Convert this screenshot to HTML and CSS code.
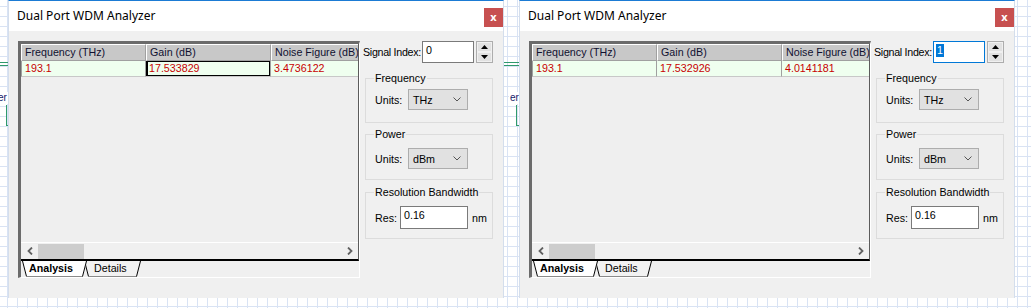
FILE: index.html
```html
<!DOCTYPE html>
<html lang="en">
<head>
  <meta charset="UTF-8">
  <title>Dual Port WDM Analyzer</title>
  <link rel="stylesheet" href="styles.css">
</head>
<body>

  <!-- layout canvas behind the dialogs -->
  <div class="backdrop">
    <div class="wire wire-top"></div>
    <div class="wire wire-bottom"></div>
    <span class="tag tag-1">er</span>
    <span class="tag tag-2">er</span>
    <div class="port port-1"></div>
    <div class="port port-2"></div>
  </div>

  <div class="desk">

    <!-- Analyzer 1 -->
    <div class="window">
      <div class="titlebar">
        <span class="title">Dual Port WDM Analyzer</span>
        <div class="close">x</div>
      </div>
      <div class="client">
        <div class="panel">
          <div class="grid">
            <div class="grid-head">
              <div class="cell c1">Frequency (THz)</div>
              <div class="cell c2">Gain (dB)</div>
              <div class="cell c3">Noise Figure (dB)</div>
            </div>
            <div class="grid-row">
              <div class="cell c1">193.1</div>
              <div class="cell c2 focus">17.533829</div>
              <div class="cell c3">3.4736122</div>
            </div>
            <div class="grid-body"></div>
            <div class="hscroll">
              <div class="arrow"><svg width="6" height="8" viewBox="0 0 6 8"><polyline points="5,0.5 1.5,4 5,7.5" /></svg></div>
              <div class="thumb"></div>
              <div class="track"></div>
              <div class="arrow"><svg width="6" height="8" viewBox="0 0 6 8"><polyline points="1,0.5 4.5,4 1,7.5" /></svg></div>
            </div>
          </div>
          <div class="tabs">
            <div class="tab tab-active">
              <svg class="tab-shape" width="65" height="16" viewBox="0 0 65 16"><polygon points="0,0 4,15.5 61,15.5 65,0" fill="#fff" /><path d="M0.5 0 L4.5 15.5" stroke="#000" /><path d="M4.5 15.5 H60.5" stroke="#8a8a8a" /><path d="M60.5 15.5 L64.5 0" stroke="#000" /></svg>
              <span>Analysis</span>
            </div>
            <div class="tab tab-details">
              <svg class="tab-shape" width="57" height="16" viewBox="0 0 57 16"><polygon points="0,0 4,15.5 53,15.5 57,0" fill="#f2f2f2" /><path d="M0.5 0 L4.5 15.5" stroke="#000" /><path d="M4.5 15.5 H52.5" stroke="#8a8a8a" /><path d="M52.5 15.5 L56.5 0" stroke="#000" /></svg>
              <span>Details</span>
            </div>
          </div>
        </div>

        <div class="side">
          <div class="index-row">
            <span class="index-label">Signal Index:</span>
            <div class="textbox index-box">0</div>
            <div class="spinner">
              <div class="spin"><svg width="7" height="4" viewBox="0 0 7 4"><polygon points="0,4 3.5,0 7,4" /></svg></div>
              <div class="spin"><svg width="7" height="4" viewBox="0 0 7 4"><polygon points="0,0 3.5,4 7,0" /></svg></div>
            </div>
          </div>
          <fieldset class="group group-freq">
            <legend>Frequency</legend>
            <div class="field">
              <span class="field-label">Units:</span>
              <div class="combo">THz<svg width="8" height="5" viewBox="0 0 8 5"><polyline points="0.5,0.5 4,4 7.5,0.5" /></svg></div>
            </div>
          </fieldset>
          <fieldset class="group group-power">
            <legend>Power</legend>
            <div class="field">
              <span class="field-label">Units:</span>
              <div class="combo">dBm<svg width="8" height="5" viewBox="0 0 8 5"><polyline points="0.5,0.5 4,4 7.5,0.5" /></svg></div>
            </div>
          </fieldset>
          <fieldset class="group group-res">
            <legend>Resolution Bandwidth</legend>
            <div class="field">
              <span class="field-label res-label">Res:</span>
              <div class="textbox res-box">0.16</div>
              <span class="unit">nm</span>
            </div>
          </fieldset>
        </div>
      </div>
    </div>

    <!-- Analyzer 2 -->
    <div class="window">
      <div class="titlebar">
        <span class="title">Dual Port WDM Analyzer</span>
        <div class="close">x</div>
      </div>
      <div class="client">
        <div class="panel">
          <div class="grid">
            <div class="grid-head">
              <div class="cell c1">Frequency (THz)</div>
              <div class="cell c2">Gain (dB)</div>
              <div class="cell c3">Noise Figure (dB)</div>
            </div>
            <div class="grid-row">
              <div class="cell c1">193.1</div>
              <div class="cell c2">17.532926</div>
              <div class="cell c3">4.0141181</div>
            </div>
            <div class="grid-body"></div>
            <div class="hscroll">
              <div class="arrow"><svg width="6" height="8" viewBox="0 0 6 8"><polyline points="5,0.5 1.5,4 5,7.5" /></svg></div>
              <div class="thumb"></div>
              <div class="track"></div>
              <div class="arrow"><svg width="6" height="8" viewBox="0 0 6 8"><polyline points="1,0.5 4.5,4 1,7.5" /></svg></div>
            </div>
          </div>
          <div class="tabs">
            <div class="tab tab-active">
              <svg class="tab-shape" width="65" height="16" viewBox="0 0 65 16"><polygon points="0,0 4,15.5 61,15.5 65,0" fill="#fff" /><path d="M0.5 0 L4.5 15.5" stroke="#000" /><path d="M4.5 15.5 H60.5" stroke="#8a8a8a" /><path d="M60.5 15.5 L64.5 0" stroke="#000" /></svg>
              <span>Analysis</span>
            </div>
            <div class="tab tab-details">
              <svg class="tab-shape" width="57" height="16" viewBox="0 0 57 16"><polygon points="0,0 4,15.5 53,15.5 57,0" fill="#f2f2f2" /><path d="M0.5 0 L4.5 15.5" stroke="#000" /><path d="M4.5 15.5 H52.5" stroke="#8a8a8a" /><path d="M52.5 15.5 L56.5 0" stroke="#000" /></svg>
              <span>Details</span>
            </div>
          </div>
        </div>

        <div class="side">
          <div class="index-row">
            <span class="index-label">Signal Index:</span>
            <div class="textbox index-box index-focus"><span class="selected">1</span></div>
            <div class="spinner">
              <div class="spin"><svg width="7" height="4" viewBox="0 0 7 4"><polygon points="0,4 3.5,0 7,4" /></svg></div>
              <div class="spin"><svg width="7" height="4" viewBox="0 0 7 4"><polygon points="0,0 3.5,4 7,0" /></svg></div>
            </div>
          </div>
          <fieldset class="group group-freq">
            <legend>Frequency</legend>
            <div class="field">
              <span class="field-label">Units:</span>
              <div class="combo">THz<svg width="8" height="5" viewBox="0 0 8 5"><polyline points="0.5,0.5 4,4 7.5,0.5" /></svg></div>
            </div>
          </fieldset>
          <fieldset class="group group-power">
            <legend>Power</legend>
            <div class="field">
              <span class="field-label">Units:</span>
              <div class="combo">dBm<svg width="8" height="5" viewBox="0 0 8 5"><polyline points="0.5,0.5 4,4 7.5,0.5" /></svg></div>
            </div>
          </fieldset>
          <fieldset class="group group-res">
            <legend>Resolution Bandwidth</legend>
            <div class="field">
              <span class="field-label res-label">Res:</span>
              <div class="textbox res-box">0.16</div>
              <span class="unit">nm</span>
            </div>
          </fieldset>
        </div>
      </div>
    </div>

  </div>

</body>
</html>
```

FILE: styles.css
```css
* {
  box-sizing: border-box;
}

body {
  margin: 0;
  height: 308px;
  overflow: hidden;
  position: relative;
  font-family: "Liberation Sans", Arial, sans-serif;
  font-size: 11px;
  color: #000;
  background-color: #fff;
  background-image:
    linear-gradient(to right, #d9e3f4 1px, transparent 1px),
    linear-gradient(to bottom, #d9e3f4 1px, transparent 1px);
  background-size: 10px 10px;
  background-position: 7px 6px;
}

/* canvas behind the dialogs */
.backdrop {
  position: absolute;
  inset: 0;
}

.wire {
  position: absolute;
  left: 0;
  width: 1000px;
  height: 1px;
  background: #2f9a6c;
}

.wire-top { top: 62px; }
.wire-bottom { top: 65px; }

.tag {
  position: absolute;
  top: 92px;
  height: 12px;
  padding: 0 1px;
  line-height: 12px;
  font-size: 10px;
  color: #14206a;
  background: #fff;
}

.tag-1 { left: -3px; }
.tag-2 { left: 509px; }

.port {
  position: absolute;
  top: 105px;
  width: 20px;
  height: 21px;
  border-left: 1px solid #2f9a6c;
  border-bottom: 1px solid #2f9a6c;
}

.port-1 { left: 6px; }
.port-2 { left: 516px; }

.desk {
  position: relative;
  display: flex;
  gap: 15px;
  padding-left: 8px;
}

/* dialog window */
.window {
  width: 496px;
  height: 298px;
  display: flex;
  flex-direction: column;
  background: #f0f0f0;
  border-top: 1px solid #1b7bd4;
  border-left: 1px solid #d4deec;
  border-right: 1px solid #d4deec;
}

.titlebar {
  height: 30px;
  display: flex;
  justify-content: space-between;
  background: #fff;
}

.title {
  padding-left: 8px;
  line-height: 30px;
  font-family: "Noto Sans", "Open Sans", sans-serif;
  font-size: 12px;
  color: #000;
}

.close {
  width: 19px;
  height: 19px;
  margin-top: 7px;
  background: #c75050;
  color: #fff;
  font-family: "Noto Sans", sans-serif;
  font-weight: bold;
  font-size: 11px;
  line-height: 17px;
  text-align: center;
}

.client {
  flex: 1;
  display: flex;
  padding: 10px 9px 0 9px;
  font-size: 10.7px;
}

/* sunken grid panel */
.panel {
  width: 342px;
  height: 237px;
  display: flex;
  flex-direction: column;
  border-top: 3px solid #6b6b6b;
  border-left: 3px solid #6b6b6b;
  border-right: 1px solid #fff;
  border-bottom: 1px solid #fff;
}

.grid {
  flex: 1;
  display: flex;
  flex-direction: column;
  background: #efefef;
  border-right: 1px solid #5c5c5c;
  border-bottom: 2px solid #000;
}

.grid-head,
.grid-row {
  display: flex;
}

.cell {
  height: 17px;
  padding-left: 3px;
  line-height: 15px;
  white-space: nowrap;
  overflow: hidden;
}

.c1, .c2 { width: 125px; }
.c3 { flex: 1; }

.grid-head .cell {
  background: #c8c8c8;
  border-top: 1px solid #fff;
  border-left: 1px solid #fff;
  border-right: 1px solid #a0a0a0;
  border-bottom: 1px solid #a0a0a0;
  color: #101030;
}

.grid-head .c3 {
  border-right: none;
}

.grid-row .cell {
  height: 16px;
  background: #efffef;
  color: #c80000;
  border-right: 1px solid #a0a0a0;
  border-bottom: 1px solid #c8c8c8;
}

.grid-row .c1 {
  border-left: 1px solid #a0a0a0;
}

.grid-row .c3 {
  border-right: none;
}

.grid-row .focus {
  box-shadow: inset 0 0 0 1px #000, inset 1px 0 0 1px #000;
}

.grid-body {
  flex: 1;
}

.hscroll {
  height: 17px;
  display: flex;
  align-items: center;
  background: #f0f0f0;
  border-top: 1px solid #fff;
}

.arrow {
  width: 17px;
  height: 16px;
  display: flex;
  align-items: center;
  justify-content: center;
}

.arrow polyline {
  fill: none;
  stroke: #606060;
  stroke-width: 1.8;
}

.thumb {
  width: 46px;
  height: 15px;
  background: #cdcdcd;
}

.track {
  flex: 1;
}

/* sheet tabs */
.tabs {
  height: 16px;
  display: flex;
  background: #f0f0f0;
}

.tab {
  position: relative;
  height: 16px;
  line-height: 15px;
}

.tab-shape {
  position: absolute;
  left: 0;
  top: 0;
}

.tab span {
  position: relative;
}

.tab-active {
  width: 65px;
  margin-left: 1px;
  padding-left: 7px;
  font-weight: bold;
  z-index: 1;
}

.tab-details {
  width: 57px;
  margin-left: -3px;
  padding-left: 10px;
}

/* right side controls */
.side {
  width: 133px;
  display: flex;
  flex-direction: column;
}

.index-row {
  height: 22px;
  display: flex;
  align-items: center;
  padding-left: 3px;
}

.index-label {
  flex: 1;
  min-width: 0;
  white-space: nowrap;
  letter-spacing: -0.3px;
}

.textbox {
  position: relative;
  background: #fff;
  border: 1px solid #7a7a7a;
  padding: 2px 0 0 3px;
  line-height: 13px;
}

.index-box {
  width: 52px;
  height: 22px;
}

.index-focus {
  border-color: #0078d7;
  padding-left: 2px;
}

.selected {
  display: inline-block;
  padding: 0 1px;
  background: #0078d7;
  color: #fff;
}

.spinner {
  width: 17px;
  height: 22px;
  margin-left: 2px;
  display: flex;
  flex-direction: column;
  border: 1px solid #adadad;
  background: #e1e1e1;
}

.spin {
  flex: 1;
  display: flex;
  align-items: center;
  justify-content: center;
  border: 1px solid #f0f0f0;
}

.spin polygon {
  fill: #000;
}

.group {
  width: 128px;
  margin: 5px 0 0 5px;
  padding: 7px 0 10px 9px;
  border: 1px solid #dcdcdc;
  min-width: 0;
}

.group legend {
  margin-left: -1px;
  padding: 0 1px;
  line-height: 13px;
}

.group-freq {
  margin-top: 9px;
  padding-top: 4px;
  padding-bottom: 12px;
}

.group-res {
  margin-top: 6px;
  padding-bottom: 9px;
}

.field {
  display: flex;
  align-items: center;
}

.field-label {
  width: 33px;
}

.res-label {
  width: 25px;
}

.combo {
  width: 60px;
  height: 21px;
  display: flex;
  align-items: center;
  justify-content: space-between;
  padding: 0 6px 0 4px;
  background: #e1e1e1;
  border: 1px solid #adadad;
}

.combo polyline {
  fill: none;
  stroke: #555;
  stroke-width: 1;
}

.res-box {
  width: 68px;
  height: 23px;
}

.unit {
  margin-left: 4px;
}
```
